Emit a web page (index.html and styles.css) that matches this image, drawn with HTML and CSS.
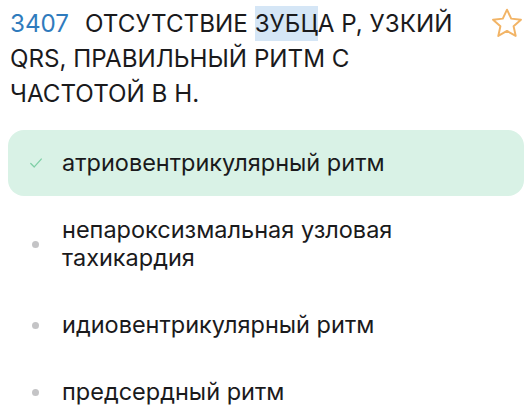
FILE: index.html
```html
<!DOCTYPE html>
<html>

<head>
    <title>Вопрос 3407</title>

    <link rel="stylesheet" href="styles.css">
</head>

<body>
    <div class="question">
        <div class="question-head">
            <p class="question-text"><span class="question-num">3407</span><span>ОТСУТСТВИЕ </span><mark class="hl">ЗУБЦ</mark><span>А Р, УЗКИЙ </span><span>QRS, ПРАВИЛЬНЫЙ РИТМ С </span><span>ЧАСТОТОЙ В Н.</span></p>
            <svg class="star" viewBox="2 1.5 20 20" width="30" height="30">
                <path d="M12 2.6l2.8 6 6.5.7-4.9 4.4 1.4 6.4L12 16.8l-5.8 3.3 1.4-6.4-4.9-4.4 6.5-.7z"
                    fill="none" stroke="#f2b466" stroke-width="1.3" stroke-linejoin="round" />
            </svg>
        </div>

        <ul class="answers">
            <li class="answer correct">
                <span class="mark">
                    <svg viewBox="0 0 16 16" width="16" height="14">
                        <path d="M2 8.5l4 4L14 3.5" fill="none" stroke="#7fcfa6" stroke-width="1.5"
                            stroke-linecap="round" stroke-linejoin="round" />
                    </svg>
                </span>
                <span class="answer-text">атриовентрикулярный ритм</span>
            </li>
            <li class="answer">
                <span class="mark"><span class="dot"></span></span>
                <span class="answer-text">непароксизмальная узловая тахикардия</span>
            </li>
            <li class="answer">
                <span class="mark"><span class="dot"></span></span>
                <span class="answer-text">идиовентрикулярный ритм</span>
            </li>
            <li class="answer">
                <span class="mark"><span class="dot"></span></span>
                <span class="answer-text">предсердный ритм</span>
            </li>
        </ul>
    </div>
</body>

</html>
```

FILE: styles.css
```css
body {
    margin: 0;
    background-color: #ffffff;
    color: #1a1a1c;
    font-family: Inter, Roboto, 'Noto Sans', sans-serif;
}

.question {
    padding: 0 8px;
}

.question-head {
    display: flex;
    align-items: flex-start;
    justify-content: space-between;
    padding: 6px 0 0 2px;
}

.question-text {
    margin: 0;
    font-size: 24.2px;
    line-height: 35px;
    max-width: 460px;
}

.question-num {
    color: #2f7bbd;
    margin-right: 16px;
}

.hl {
    display: inline-block;
    background-color: #d5e6f6;
    color: inherit;
}

.star {
    margin: 2px 2px 0 0;
    flex-shrink: 0;
}

.answers {
    list-style: none;
    margin: 19px 0 0;
    padding: 0;
}

.answer {
    display: flex;
    align-items: center;
    padding: 19px 0;
    margin-bottom: 1px;
    border-radius: 16px;
    font-size: 23.5px;
    line-height: 28px;
}

.answer.correct {
    background-color: #d9f2e6;
}

.mark {
    width: 53px;
    flex-shrink: 0;
    display: flex;
    justify-content: center;
    padding-left: 1px;
}

.dot {
    width: 7px;
    height: 7px;
    border-radius: 50%;
    background-color: #c4c4c6;
}

.answer-text {
    padding-right: 110px;
}
```
